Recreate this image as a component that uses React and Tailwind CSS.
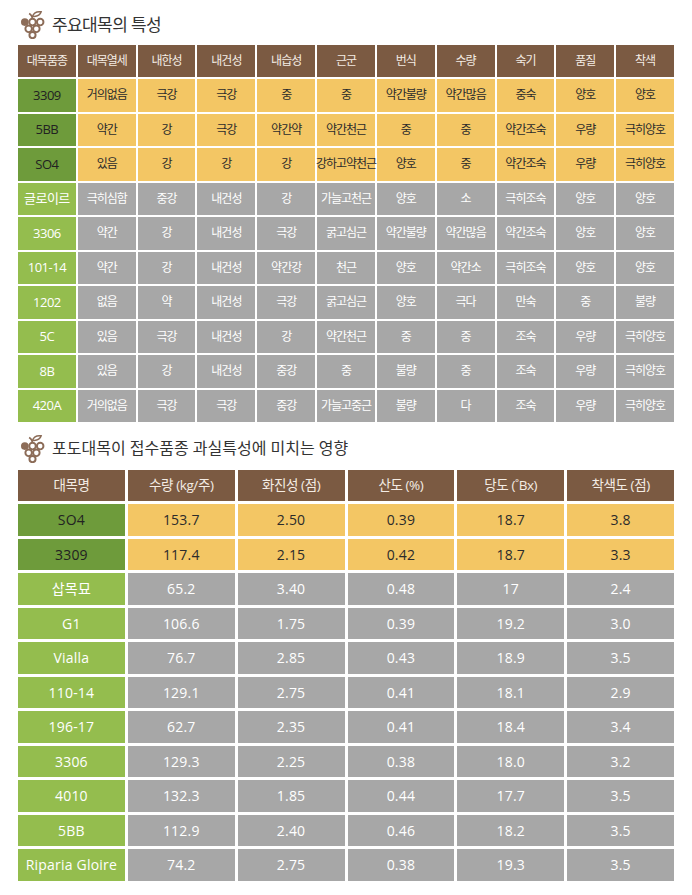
import React from "react";

const FONT = { fontFamily: '"Open Sans", "Noto Sans CJK KR", sans-serif' };

const HEAD1 = ["대목품종", "대목열세", "내한성", "내건성", "내습성", "근군", "번식", "수량", "숙기", "품질", "착색"];

const ROWS1 = [
  ["3309", "거의없음", "극강", "극강", "중", "중", "약간불량", "약간많음", "중숙", "양호", "양호"],
  ["5BB", "약간", "강", "극강", "약간약", "약간천근", "중", "중", "약간조숙", "우량", "극히양호"],
  ["SO4", "있음", "강", "강", "강", "강하고약천근", "양호", "중", "약간조숙", "우량", "극히양호"],
  ["글로이르", "극히심함", "중강", "내건성", "강", "가늘고천근", "양호", "소", "극히조숙", "양호", "양호"],
  ["3306", "약간", "강", "내건성", "극강", "굵고심근", "약간불량", "약간많음", "약간조숙", "양호", "양호"],
  ["101-14", "약간", "강", "내건성", "약간강", "천근", "양호", "약간소", "극히조숙", "양호", "양호"],
  ["1202", "없음", "약", "내건성", "극강", "굵고심근", "양호", "극다", "만숙", "중", "불량"],
  ["5C", "있음", "극강", "내건성", "강", "약간천근", "중", "중", "조숙", "우량", "극히양호"],
  ["8B", "있음", "강", "내건성", "중강", "중", "불량", "중", "조숙", "우량", "극히양호"],
  ["420A", "거의없음", "극강", "극강", "중강", "가늘고중근", "불량", "다", "조숙", "우량", "극히양호"],
];

const HEAD2 = ["대목명", "수량 (kg/주)", "화진성 (점)", "산도 (%)", "당도 (˚Bx)", "착색도 (점)"];

const ROWS2 = [
  ["SO4", "153.7", "2.50", "0.39", "18.7", "3.8"],
  ["3309", "117.4", "2.15", "0.42", "18.7", "3.3"],
  ["삽목묘", "65.2", "3.40", "0.48", "17", "2.4"],
  ["G1", "106.6", "1.75", "0.39", "19.2", "3.0"],
  ["Vialla", "76.7", "2.85", "0.43", "18.9", "3.5"],
  ["110-14", "129.1", "2.75", "0.41", "18.1", "2.9"],
  ["196-17", "62.7", "2.35", "0.41", "18.4", "3.4"],
  ["3306", "129.3", "2.25", "0.38", "18.0", "3.2"],
  ["4010", "132.3", "1.85", "0.44", "17.7", "3.5"],
  ["5BB", "112.9", "2.40", "0.46", "18.2", "3.5"],
  ["Riparia Gloire", "74.2", "2.75", "0.38", "19.3", "3.5"],
];

function Grape() {
  const c = "#8c6c58";
  return (
    <svg width="25" height="29" viewBox="0 0 26 30">
      <path d="M13 10 C13 7 12 5 9.5 3.5" stroke={c} strokeWidth="1.8" fill="none" />
      <path d="M13 6.5 C14.5 2.5 18 1.2 22 1.8 C21 5 17.5 7 13 6.5 Z" fill="#fff" stroke={c} strokeWidth="1.6" />
      <circle cx="5" cy="12.5" r="4" fill={c} />
      <circle cx="13" cy="12.5" r="3.4" fill="#fff" stroke={c} strokeWidth="2" />
      <circle cx="21" cy="12.5" r="3.4" fill="#fff" stroke={c} strokeWidth="2" />
      <circle cx="9" cy="19.5" r="3.4" fill="#fff" stroke={c} strokeWidth="2" />
      <circle cx="17" cy="19.5" r="3.4" fill="#fff" stroke={c} strokeWidth="2" />
      <circle cx="13" cy="26" r="3.2" fill="#fff" stroke={c} strokeWidth="2" />
    </svg>
  );
}

function Title({ children, className }) {
  return (
    <div className={"flex items-center gap-[7px] pl-[20px] " + className}>
      <Grape />
      <h2 className="text-[#333] leading-none">{children}</h2>
    </div>
  );
}

export default function App() {
  return (
    <div className="w-[692px] min-h-[895px] bg-white pt-[9px]" style={FONT}>
      {/* 주요대목 */}
      <Title className="h-[30px] text-[17px] tracking-[-0.6px]">주요대목의 특성</Title>

      <div className="mx-[18px] mt-[6px] grid grid-cols-11 gap-[2px] text-[12px] tracking-[-1px]">
        {HEAD1.map((h) => (
          <div key={h} className="h-[32px] bg-[#7b5a42] text-[#f4ece4] flex items-center justify-center">
            {h}
          </div>
        ))}
        {ROWS1.map((row, i) =>
          row.map((cell, j) => {
            const top = i < 3;
            let cls = top ? "bg-[#f3c664] text-[#2b2b2b]" : "bg-[#a7a7a7] text-white";
            if (j === 0) cls = (top ? "bg-[#6e9b3b] text-[#222]" : "bg-[#94bd4e] text-white") + " text-[13px] tracking-[-0.5px]";
            return (
              <div key={i + "-" + j} className={"h-[32.5px] flex items-center justify-center whitespace-nowrap " + cls}>
                {cell}
              </div>
            );
          })
        )}
      </div>

      {/* 과실특성 */}
      <Title className="h-[30px] mt-[11px] text-[16px] tracking-[0px]">
        포도대목이 접수품종 과실특성에 미치는 영향
      </Title>

      <div className="mx-[18px] mt-[7px] grid grid-cols-6 gap-[3px] text-[13.5px] tracking-[-0.4px]">
        {HEAD2.map((h) => (
          <div key={h} className="h-[31px] bg-[#7b5a42] text-[#f4ece4] flex items-center justify-center">
            {h}
          </div>
        ))}
        {ROWS2.map((row, i) =>
          row.map((cell, j) => {
            const top = i < 2;
            let cls = top ? "bg-[#f3c664] text-[#2b2b2b]" : "bg-[#a7a7a7] text-white";
            if (j === 0) cls = top ? "bg-[#6e9b3b] text-[#222]" : "bg-[#94bd4e] text-white";
            return (
              <div key={i + "-" + j} className={"h-[31.5px] flex items-center justify-center whitespace-nowrap text-[14px] tracking-[0.2px] " + cls}>
                {cell}
              </div>
            );
          })
        )}
      </div>
    </div>
  );
}
